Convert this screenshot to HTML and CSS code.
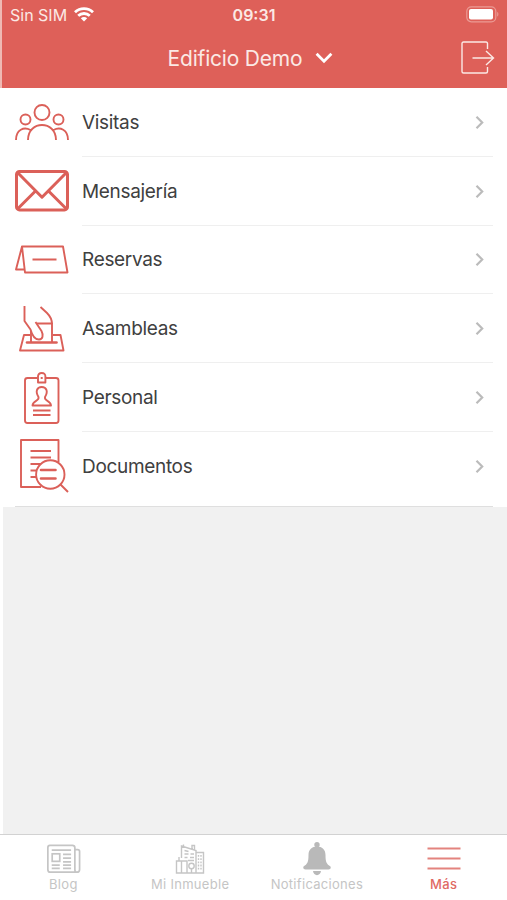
FILE: index.html
```html
<!DOCTYPE html>
<html lang="es">
<head>
    <meta charset="UTF-8">
    <meta name="viewport" content="width=device-width, initial-scale=1.0">
    <title>Edificio Demo</title>
    <link rel="stylesheet" href="styles.css">
</head>
<body>
    <div class="app">
        <header class="header">
            <!-- Barra de estado -->
            <div class="status-bar">
                <div class="carrier">
                    <span>Sin SIM</span>
                    <svg class="wifi" width="20" height="15" viewBox="0 0 20 15" fill="none" stroke="currentColor" stroke-width="2.8">
                        <path d="M1 5.2C6 .4 14 .4 19 5.2M4.2 8.8C7.5 5.700 12.5 5.700 15.8 8.8"/>
                        <path d="M6.8 11.2C8.6 9.5 11.4 9.5 13.2 11.2L10 14.5Z" fill="currentColor" stroke="none"/>
                    </svg>
                </div>
                <div class="time">09:31</div>
                <svg class="battery" width="33" height="17" viewBox="0 0 33 17">
                    <rect x=".8" y=".8" width="29" height="15" rx="4.5" fill="none" stroke="#eb9a94" stroke-width="1.2"/>
                    <rect x="3" y="3" width="24" height="10.5" rx="2" fill="#fff"/>
                    <path d="M31.2 6v4.5c1.6-.6 1.6-3.9 0-4.5z" fill="#eb9a94"/>
                </svg>
            </div>
            <!-- Título -->
            <div class="nav-bar">
                <div class="title">
                    <span>Edificio Demo</span>
                    <svg width="18" height="12" viewBox="0 0 18 12" fill="none" stroke="currentColor" stroke-width="2.8">
                        <path d="M1.6 1.8L9 9.2l7.4-7.4"/>
                    </svg>
                </div>
                <svg class="logout" width="34" height="34" viewBox="0 0 34 34" fill="none" stroke="currentColor" stroke-width="1.4">
                    <path d="M26.500 8V2.500Q26.500 1 25 1H2.500Q1 1 1 2.500V30.500Q1 32 2.500 32H25Q26.500 32 26.500 30.500V26"/>
                    <path d="M11.500 17H32M25 10L32.500 17 25 24"/>
                </svg>
            </div>
        </header>

        <ul class="menu">
            <li class="item">
                <div class="icon">
                    <svg width="54" height="54" viewBox="0 0 54 54">
                        <circle cx="27" cy="17.500" r="7.500"/>
                        <circle cx="10.500" cy="24.500" r="5"/>
                        <circle cx="43.500" cy="24.500" r="5"/>
                        <path d="M13 45C13 25 41 25 41 45M1 45C1 34.500 9 31.500 15.500 35M53 45C53 34.500 45 31.500 38.500 35"/>
                    </svg>
                </div>
                <div class="label">Visitas<svg class="arrow" width="10" height="15" viewBox="0 0 10 15"><path d="M1.500 1.800L7.200 7.500 1.500 13.200"/></svg></div>
            </li>
            <li class="item">
                <div class="icon">
                    <svg class="sobre" width="54" height="54" viewBox="0 0 54 54">
                        <rect x="1.500" y="7.400" width="51" height="38.500" rx="3"/>
                        <path d="M2.500 8.500L27 33.200 51.500 8.500M2.500 45L20 27.500M51.500 45L34 27.500"/>
                    </svg>
                </div>
                <div class="label">Mensajería<svg class="arrow" width="10" height="15" viewBox="0 0 10 15"><path d="M1.500 1.800L7.200 7.500 1.500 13.200"/></svg></div>
            </li>
            <li class="item">
                <div class="icon">
                    <svg width="54" height="54" viewBox="0 0 54 54">
                        <path d="M7 13.500H48L52.500 39.500H10zM7 13.500L1 36.500H9.500M17.500 26.500H41.500"/>
                    </svg>
                </div>
                <div class="label">Reservas<svg class="arrow" width="10" height="15" viewBox="0 0 10 15"><path d="M1.500 1.800L7.200 7.500 1.500 13.200"/></svg></div>
            </li>
            <li class="item">
                <div class="icon">
                    <svg width="54" height="54" viewBox="0 0 54 54">
                        <path d="M9.500 4V19L15.500 27.500C17 33 20 37.500 24 37.500C28 37.500 28.500 33 26.500 29L20.500 20M25.500 5L32 11Q37 16 37 22"/>
                        <path d="M22 21.500H37V40.500M16 29V40.500M15 33H9L5 48.500H48.500L45.500 33H38"/>
                        <path class="ranura" d="M12 40.500H41.500"/>
                    </svg>
                </div>
                <div class="label">Asambleas<svg class="arrow" width="10" height="15" viewBox="0 0 10 15"><path d="M1.500 1.800L7.200 7.500 1.500 13.200"/></svg></div>
            </li>
            <li class="item">
                <div class="icon">
                    <svg width="54" height="54" viewBox="0 0 54 54">
                        <path d="M22.500 7H12.500Q10 7 10 9.500V49.500Q10 52 12.500 52H41Q43.500 52 43.500 49.500V9.500Q43.500 7 41 7H30.500"/>
                        <path d="M23 11.500V5.500Q23 2 26.700 2T30.400 5.500V11.500zM25.700 7h2"/>
                        <path d="M23.500 26C20 20.500 22 16 26.700 16S33.500 20.500 30 26C29 30.500 35.500 29 36 34.500H17.500C18 29 24.500 30.500 23.500 26zM18 39.500H35.500M18 44H35.500"/>
                    </svg>
                </div>
                <div class="label">Personal<svg class="arrow" width="10" height="15" viewBox="0 0 10 15"><path d="M1.500 1.800L7.200 7.500 1.500 13.200"/></svg></div>
            </li>
            <li class="item item-last">
                <div class="icon">
                    <svg width="54" height="54" viewBox="0 0 54 54">
                        <path d="M26 48H6V1H43.500V23M15.500 12H36M15.500 18.500H36M15.500 25H26M15.500 31.500H21M15.500 38H21"/>
                        <circle cx="35.300" cy="35.500" r="14.200"/>
                        <path class="lineas" d="M26 31H40.500M26 39.500H40.500"/>
                        <path d="M45.500 45.500L53 53"/>
                    </svg>
                </div>
                <div class="label">Documentos<svg class="arrow" width="10" height="15" viewBox="0 0 10 15"><path d="M1.500 1.800L7.200 7.500 1.500 13.200"/></svg></div>
            </li>
        </ul>

        <main class="empty"></main>

        <!-- Pestañas inferiores -->
        <nav class="tabs">
            <div class="tab tab-blog">
                <svg width="34" height="34" viewBox="1 0 36 34" fill="none" stroke="currentColor" stroke-width="1.8">
                    <path d="M30.500 28V5Q30.500 2.500 28 2.500H4Q1.900 2.500 1.900 5V28Q1.900 31 4.500 31H32.500Q35.500 31 35.500 28V9Q35.500 7 33.500 7H31M30.500 28Q30.500 31 32.500 31"/>
                    <rect x="6.500" y="11.500" width="8" height="8"/>
                    <path d="M6 7.500H26.500M18 12H26.500M18 16H26.500M18 20H26.500M6 23.500H14.500M18 23.500H26.500M6 27H14.500M18 27H26.500"/>
                </svg>
                <span>Blog</span>
            </div>
            <div class="tab tab-inmueble">
                <svg width="30" height="34" viewBox="0 0 30 34" fill="none" stroke="currentColor" stroke-width="1.4">
                    <path d="M6.500 16V4L21 8.500V31M8.500 4.500V2.500M17 7V3.500H19.500V8M9.500 8.500l4 1M9.500 12h4M15.500 12h3.500M9.500 15.500h3M15 15.500h4M13 18.500h6"/>
                    <path d="M21 10.500H28.500V31H1.500V19H12V31M4 19V15M6.500 19V31"/>
                    <circle cx="16.500" cy="24" r="2.700"/>
                    <path d="M16.500 26.500V31"/>
                    <path d="M23.500 13V29M26 13V29" stroke-dasharray="1.800 1.400"/>
                </svg>
                <span>Mi Inmueble</span>
            </div>
            <div class="tab tab-notificaciones">
                <svg width="30" height="34" viewBox="0 0 30 34" fill="#b9b9b9">
                    <circle cx="15" cy="2.800" r="2.700"/>
                    <path d="M15 4.500C20 4.500 23.500 7.500 23.500 13C23.500 20 24.500 22 28.500 24.500Q29.500 27.500 26.500 27.500H3.500Q.5 27.500 1.500 24.500C5.500 22 6.500 20 6.500 13C6.500 7.500 10 4.500 15 4.500zM11 29H19C18.500 34.500 11.500 34.500 11 29z"/>
                </svg>
                <span>Notificaciones</span>
            </div>
            <div class="tab tab-mas">
                <svg width="34" height="34" viewBox="0 0 34 34" fill="none" stroke="#e3837e" stroke-width="1.9">
                    <path d="M.5 6.500H33.500M.5 16.500H33.500M.5 26.500H33.500"/>
                </svg>
                <span>Más</span>
            </div>
        </nav>
    </div>
</body>
</html>
```
FILE: styles.css
```css
body {
    margin: 0;
    background: #fff;
    font-family: Inter, "Liberation Sans", sans-serif;
}
.app {
    display: flex;
    flex-direction: column;
    height: 900px;
    overflow: hidden;
}
.header {
    box-sizing: border-box;
    height: 88px;
    flex: none;
    color: #fbe9e5;
    background: #de6059;
    border-left: 2px solid #efb9b3;
}
.status-bar {
    display: grid;
    grid-template-columns: 1fr auto 1fr;
    align-items: center;
    height: 29px;
    padding: 0 8px 0 8px;
}
.carrier {
    display: flex;
    align-items: center;
    gap: 7px;
    font-size: 16px;
}
.wifi {
    color: #fff;
}
.time {
    padding-right: 1px;
    font-size: 16px;
    font-weight: 600;
}
.battery {
    justify-self: end;
}
.nav-bar {
    display: grid;
    grid-template-columns: 34px 1fr 34px;
    align-items: center;
    height: 58px;
    padding: 0 12px;
}
.title {
    grid-column: 2;
    display: flex;
    align-items: center;
    justify-content: center;
    gap: 13px;
    padding-right: 8px;
    font-size: 21px;
    letter-spacing: -0.2px;
}
.title svg {
    color: #fff;
}
.menu {
    flex: none;
    height: 419px;
    margin: 0;
    padding: 0;
    list-style: none;
    background: #fff;
}
.item {
    display: flex;
    height: 68.8px;
}
.icon {
    display: flex;
    align-items: center;
    width: 67px;
    padding-left: 15px;
}
.icon svg {
    fill: none;
    stroke: #db6059;
    stroke-width: 1.9;
    stroke-linejoin: round;
}
.icon .sobre {
    stroke-width: 3;
}
.ranura,
.lineas {
    stroke-width: 2.6;
    stroke-linecap: round;
}
.label {
    box-sizing: border-box;
    display: flex;
    flex: 1;
    align-items: center;
    justify-content: space-between;
    margin-right: 14px;
    padding: 1px 8px 0 0;
    border-bottom: 1px solid #efefef;
    color: #404040;
    font-size: 19px;
    letter-spacing: -0.32px;
}
.arrow {
    fill: none;
    stroke: #bbb;
    stroke-width: 2.2;
}
.item-last .label {
    border-bottom: 0;
}
.item-last {
    box-sizing: border-box;
    height: 75px;
    margin: 0 14px 0 15px;
    padding-bottom: 6px;
    border-bottom: 1px solid #dfdfdf;
}
.item-last .icon {
    padding-left: 0;
}
.item-last .label {
    margin-right: 0;
}
.empty {
    flex: 1;
    margin-left: 3px;
    background: #f1f1f1;
}
.tabs {
    box-sizing: border-box;
    display: grid;
    grid-template-columns: repeat(4, 1fr);
    height: 66px;
    flex: none;
    border-top: 1px solid #d2d2d2;
    background: #fff;
}
.tab {
    display: flex;
    flex-direction: column;
    align-items: center;
    padding-top: 7px;
    color: #c5c5c5;
    font-size: 13px;
    line-height: 16px;
    letter-spacing: 0.3px;
}
.tab-blog svg {
    margin-left: 2px;
}
.tab-mas {
    color: #df6a64;
    font-weight: 500;
}
```
